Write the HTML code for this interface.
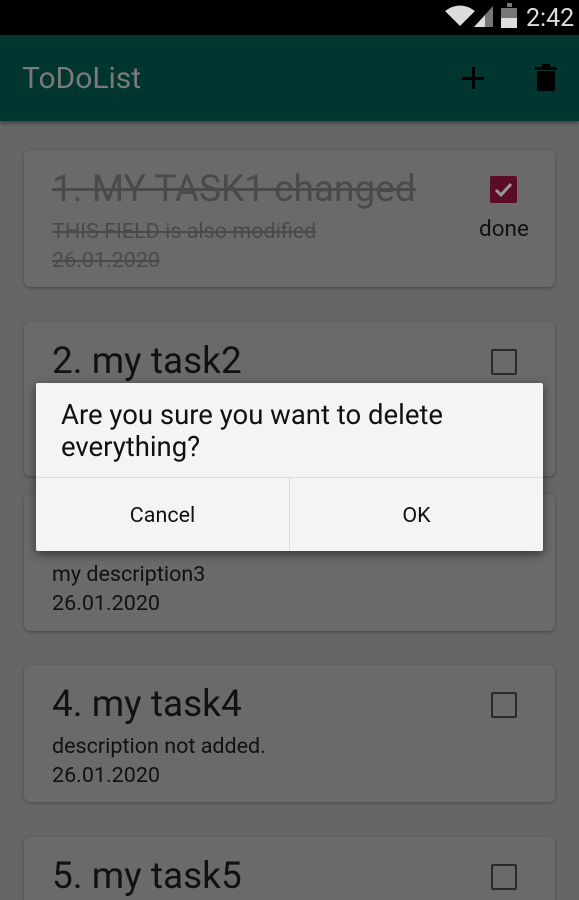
<!DOCTYPE html>
<html><head><style>
*{margin:0;padding:0;box-sizing:border-box}
html,body{width:579px;height:900px;overflow:hidden}
body{background:#666;font-family:"Roboto","Liberation Sans",sans-serif;position:relative}
.sb{position:absolute;top:0;left:0;width:579px;height:35px;background:#000}
.tb{position:absolute;top:35px;left:0;width:579px;height:86px;background:#003530;box-shadow:0 2px 4px rgba(0,0,0,.4)}
.tb .t{position:absolute;left:22px;top:26px;font-size:30px;color:#7a7a7a}
.card{position:absolute;left:24px;width:531px;height:137px;background:#6a6a6a;border-radius:6px;box-shadow:0 1px 3px rgba(0,0,0,.3)}
.card .h{position:absolute;left:28px;top:18px;font-size:37px;color:#111;white-space:nowrap}
.card .d{position:absolute;left:28px;top:67px;font-size:21.5px;color:#111;line-height:29px;white-space:nowrap}
.cb{position:absolute;left:467px;top:27px;width:26px;height:26px;border:2.5px solid #2a2a2a;border-radius:2px}
.s{text-decoration:line-through;color:#4a4a4a!important}
.dlg{position:absolute;left:36px;top:383px;width:507px;height:168px;background:#f4f4f4;border-radius:2px;box-shadow:0 3px 10px rgba(0,0,0,.5)}
.dlg .m{position:absolute;left:25px;top:16px;font-size:27.5px;line-height:32px;color:#111;white-space:nowrap}
.dlg .ln{position:absolute;left:0;top:94px;width:507px;height:1px;background:#ddd}
.dlg .vl{position:absolute;left:253px;top:95px;width:1px;height:73px;background:#ddd}
.dlg .b{position:absolute;top:96px;height:73px;line-height:73px;text-align:center;font-size:21.5px;color:#111}
</style></head><body>
<div class="sb">
<svg style="position:absolute;left:444px;top:5px" width="32" height="22" viewBox="0 0 32 22"><path d="M16 21L1 6Q16-5 31 6Z" fill="#ddd"/></svg>
<svg style="position:absolute;left:472px;top:4px" width="22" height="24"><path d="M2 23L21 2V23Z" fill="#777"/><path d="M2 23L13 11V23Z" fill="#ddd"/></svg>
<div style="position:absolute;left:501px;top:6px;width:16px;height:22px;background:#777;border-top:2px solid #000"></div>
<div style="position:absolute;left:501px;top:18px;width:16px;height:10px;background:#ddd"></div>
<div style="position:absolute;left:507px;top:3px;width:5px;height:4px;background:#777"></div>
<div style="position:absolute;left:526px;top:4px;font-size:25px;color:#ddd">2:42</div>
</div>
<div class="tb"><div class="t">ToDoList</div>
<div style="position:absolute;left:462px;top:42px;width:22px;height:2.5px;background:#000"></div>
<div style="position:absolute;left:472px;top:32px;width:2.5px;height:22px;background:#000"></div>
<svg style="position:absolute;left:534px;top:29px" width="24" height="28" viewBox="0 0 24 28"><rect x="1" y="3" width="22" height="3" fill="#000"/><rect x="8" y="0" width="8" height="4" fill="#000"/><path d="M3 7H21V25Q21 27 19 27H5Q3 27 3 25Z" fill="#000"/></svg>
</div>

<div class="card" style="top:150px">
<div class="h s">1. MY TASK1 changed</div>
<div class="d s">THIS FIELD is also modified<br>26.01.2020</div>
<div style="position:absolute;left:466px;top:26px;width:27px;height:27px;background:#5a0c28;border-radius:2px"><svg width="27" height="27"><path d="M6 14L11 19L21 8" stroke="#999" stroke-width="3" fill="none"/></svg></div>
<div style="position:absolute;left:455px;top:66px;font-size:22.5px;color:#111">done</div>
</div>
<div class="card" style="top:322px;height:154px"><div class="h">2. my task2</div><div class="cb"></div></div>
<div class="card" style="top:494px"><div class="d" style="top:66px">my description3<br>26.01.2020</div></div>
<div class="card" style="top:665px"><div class="h">4. my task4</div><div class="d">description not added.<br>26.01.2020</div><div class="cb"></div></div>
<div class="card" style="top:837px;height:100px"><div class="h">5. my task5</div><div class="cb"></div></div>

<div class="dlg">
<div class="m">Are you sure you want to delete<br>everything?</div>
<div class="ln"></div><div class="vl"></div>
<div class="b" style="left:0;width:253px">Cancel</div>
<div class="b" style="left:254px;width:253px">OK</div>
</div>
</body></html>
